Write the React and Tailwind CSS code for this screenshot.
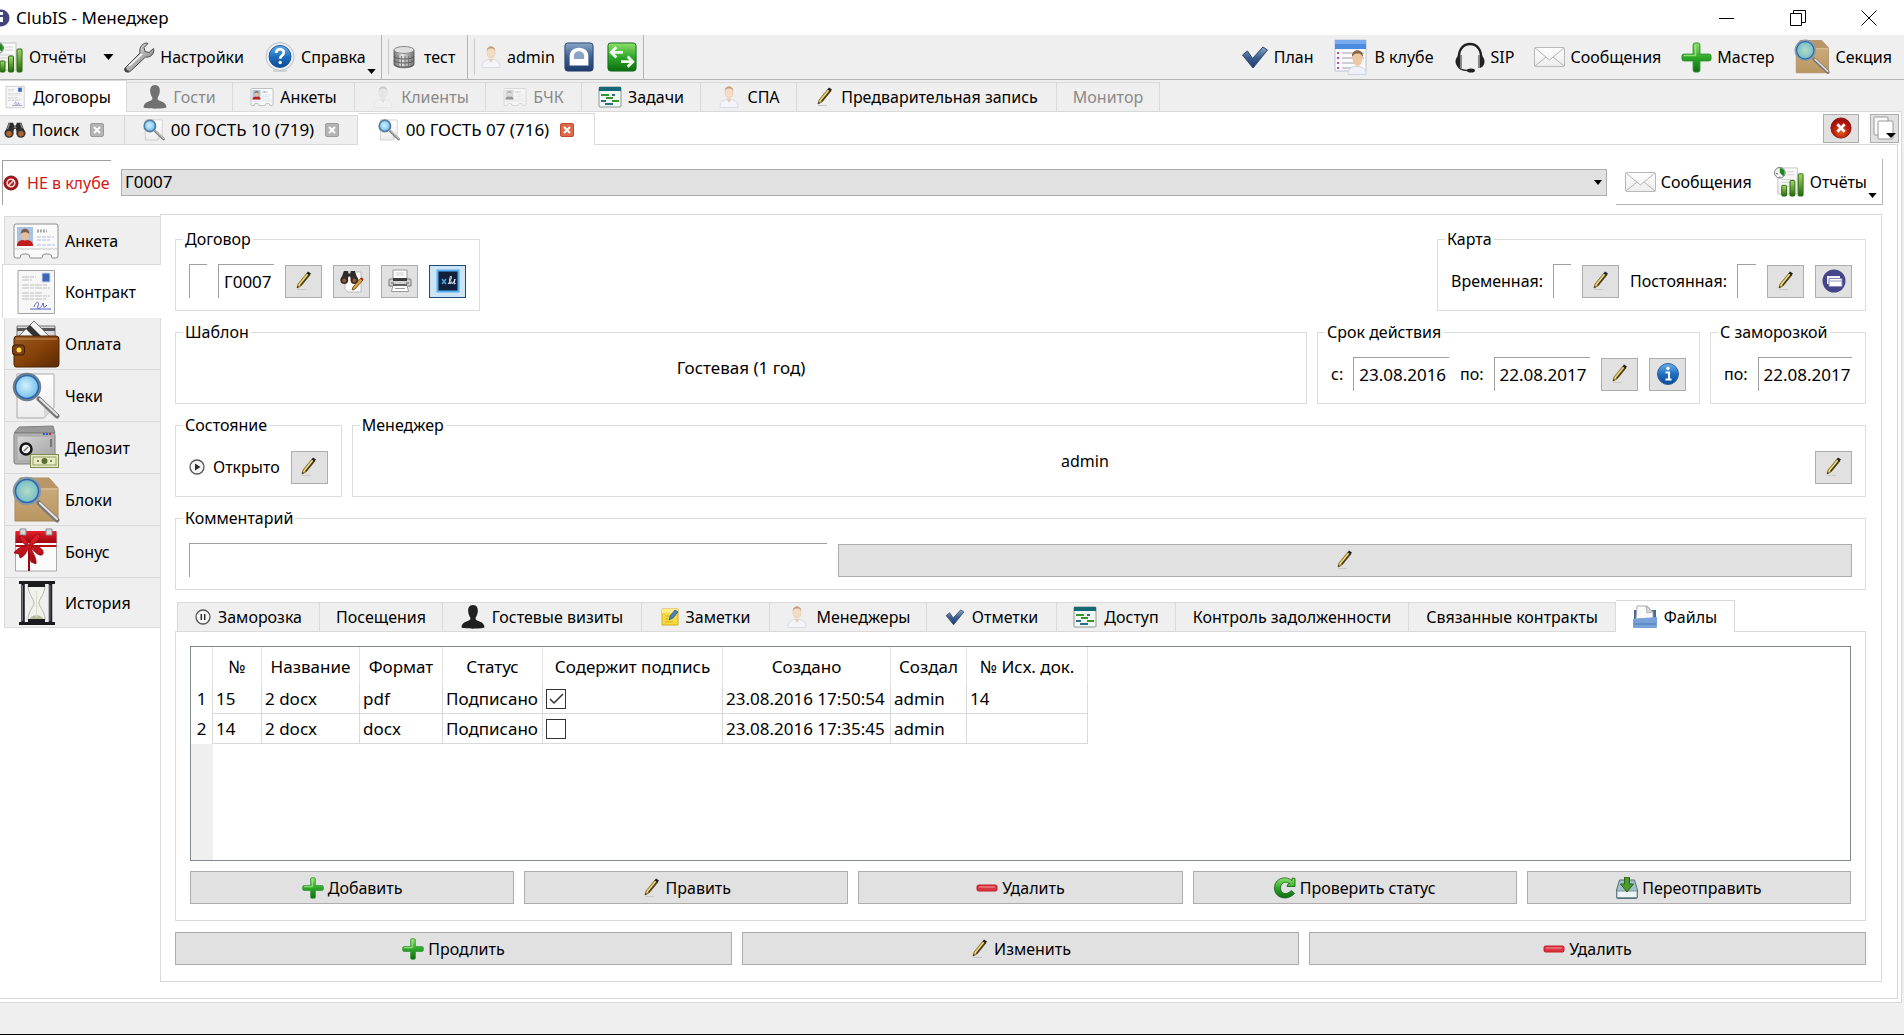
import clsx from "clsx";

/* ---------- shared gradients for all icons ---------- */

function IconDefs() {
  return (
    <svg className="absolute h-0 w-0" aria-hidden="true">
      <defs>
        <linearGradient id="green" x1="0" y1="0" x2="0" y2="1">
          <stop offset="0" stopColor="#8fe06a" />
          <stop offset="0.5" stopColor="#2fa82a" />
          <stop offset="1" stopColor="#0c6e12" />
        </linearGradient>
        <linearGradient id="bar" x1="0" y1="0" x2="0" y2="1">
          <stop offset="0" stopColor="#a6d96a" />
          <stop offset="1" stopColor="#1f6a06" />
        </linearGradient>
        <linearGradient id="blue" x1="0" y1="0" x2="0" y2="1">
          <stop offset="0" stopColor="#6db0ea" />
          <stop offset="0.5" stopColor="#1f6fc0" />
          <stop offset="1" stopColor="#0a4a94" />
        </linearGradient>
        <linearGradient id="navy" x1="0" y1="0" x2="0" y2="1">
          <stop offset="0" stopColor="#8aa6c8" />
          <stop offset="0.5" stopColor="#3d5f90" />
          <stop offset="1" stopColor="#1d3c70" />
        </linearGradient>
        <linearGradient id="steel" x1="0" y1="0" x2="1" y2="1">
          <stop offset="0" stopColor="#f4f4f4" />
          <stop offset="0.5" stopColor="#b4b4b4" />
          <stop offset="1" stopColor="#6a6a6a" />
        </linearGradient>
        <linearGradient id="door" x1="0" y1="0" x2="1" y2="1">
          <stop offset="0" stopColor="#d6d6d6" />
          <stop offset="1" stopColor="#a2a2a2" />
        </linearGradient>
        <linearGradient id="paper" x1="0" y1="0" x2="0" y2="1">
          <stop offset="0" stopColor="#ffffff" />
          <stop offset="1" stopColor="#ececec" />
        </linearGradient>
        <linearGradient id="leather" x1="0" y1="0" x2="1" y2="1">
          <stop offset="0" stopColor="#9a5c28" />
          <stop offset="0.5" stopColor="#864208" />
          <stop offset="1" stopColor="#5a2a04" />
        </linearGradient>
        <linearGradient id="box" x1="0" y1="0" x2="0" y2="1">
          <stop offset="0" stopColor="#cfb185" />
          <stop offset="1" stopColor="#b9965f" />
        </linearGradient>
        <linearGradient id="red" x1="0" y1="0" x2="0" y2="1">
          <stop offset="0" stopColor="#e8202a" />
          <stop offset="1" stopColor="#9c0710" />
        </linearGradient>
        <linearGradient id="cylinder" x1="0" y1="0" x2="1" y2="0">
          <stop offset="0" stopColor="#6e6e6e" />
          <stop offset="0.4" stopColor="#e6e6e6" />
          <stop offset="1" stopColor="#707070" />
        </linearGradient>
        <radialGradient id="lens" cx="0.45" cy="0.45" r="0.6">
          <stop offset="0" stopColor="#d2f1fc" />
          <stop offset="0.7" stopColor="#84c8ef" />
          <stop offset="1" stopColor="#3f88c8" />
        </radialGradient>
        <radialGradient id="lensGreen" cx="0.5" cy="0.5" r="0.6">
          <stop offset="0" stopColor="#b4dccb" />
          <stop offset="0.7" stopColor="#79bfc4" />
          <stop offset="1" stopColor="#3a7fae" />
        </radialGradient>
        <radialGradient id="danger" cx="0.5" cy="0.7" r="0.7">
          <stop offset="0" stopColor="#e25a1c" />
          <stop offset="0.6" stopColor="#b51a0a" />
          <stop offset="1" stopColor="#8c0a06" />
        </radialGradient>
      </defs>
    </svg>
  );
}

function Svg({ box = 24, className, children }) {
  return (
    <svg viewBox={`0 0 ${box} ${box}`} className={clsx("shrink-0", className)} fill="none" aria-hidden="true">
      {children}
    </svg>
  );
}

/* ---------- icons ---------- */

const ReportIcon = ({ className = "h-8 w-8" }) => (
  <Svg box={32} className={className}>
    <path d="M4 2h20v27H4z" fill="url(#paper)" stroke="#c4c4c4" />
    <path d="M13 6h8M13 9h8M8 14h13M8 17h10M8 21h8M8 25h6" stroke="#cfcfcf" />
    <circle cx="6" cy="7" r="5.500" fill="#f3f3f3" stroke="#777" />
    <path d="M6 7V2a5 5 0 0 1 3.500 8.500z" fill="#1f8a1a" />
    <path d="M2 8h2M6 11v1" stroke="#555" />
    <rect x="8" y="20" width="5" height="11" rx="1" fill="url(#bar)" stroke="#2b6a10" />
    <rect x="16.500" y="15" width="5" height="16" rx="1" fill="url(#bar)" stroke="#2b6a10" />
    <rect x="25" y="8" width="5" height="23" rx="1" fill="url(#bar)" stroke="#2b6a10" />
  </Svg>
);

const WrenchIcon = () => (
  <Svg box={32} className="h-8 w-8">
    <path
      d="M2 27 17 12c-1-4 1-9 6-10l2 .5-4 4 1 4 4 1 4.500-4c1.500 5-3 9.500-8 8.500L7 30.500c-3 2-7-1-5-3.500z"
      fill="url(#steel)"
      stroke="#4c4c4c"
    />
    <path d="m6 25 13-12" stroke="#fff" strokeWidth="1.500" />
    <path d="M3.500 27.500a1.500 1.500 0 1 0 2 2" stroke="#333" strokeWidth="1.500" />
  </Svg>
);

const HelpIcon = () => (
  <Svg box={32} className="h-8 w-8">
    <circle cx="16" cy="15.500" r="14" fill="#eef1f4" stroke="#b9bfc6" />
    <circle cx="16" cy="15.500" r="11" fill="url(#blue)" stroke="#1a5ca4" />
    <path d="M12.200 12c0-5 7.600-5 7.600-.4 0 3-3.600 3-3.600 6.200" stroke="#fff" strokeWidth="2.600" />
    <circle cx="16.200" cy="21.500" r="1.700" fill="#fff" />
    <path d="M9 30h14" stroke="#bbb" />
  </Svg>
);

const DatabaseIcon = () => (
  <Svg box={24} className="h-6 w-6">
    <path d="M2 5v14c0 5 20 5 20 0V5z" fill="url(#cylinder)" stroke="#6a6a6a" />
    <ellipse cx="12" cy="5" rx="10" ry="3.500" fill="#dedede" stroke="#888" />
    <path d="M2 11c0 4 20 4 20 0M2 15c0 4 20 4 20 0M2 19c0 4 20 4 20 0" stroke="#555" />
    <path d="M6 10v11.500M9.500 11v11.500M13 11v11.500M16.500 11v11.500" stroke="#777" />
  </Svg>
);

const UserIcon = ({ faded }) => (
  <Svg box={24} className={clsx("h-6 w-6", faded && "opacity-50 grayscale")}>
    <path d="M3 22.500c0-6 3-7 6.500-8h5c3.500 1 6.500 2 6.500 8z" fill="#f3f5fa" stroke="#d8dce6" />
    <path d="m9.500 14 2.500 4 2.500-4z" fill="#e8cdb2" />
    <ellipse cx="12" cy="7.500" rx="4" ry="5.800" fill="#f3dcc4" stroke="#e0c0a0" strokeWidth=".5" />
    <path d="M7.800 6C7.500 0 16.500 0 16.200 6c-1-2-2-2.500-4.200-2.500S8.800 4 7.800 6z" fill="#c49a74" />
  </Svg>
);

const SilhouetteIcon = ({ faded }) => (
  <Svg box={24} className={clsx("h-6 w-6", faded && "opacity-60")}>
    <path
      d="M12 0C8 0 7 3 7.200 6.500c.2 3 1.400 5 2.300 6.500 0 2-1.500 2.500-4 3.500C2 18 1 19 .5 22.500c3 1.500 20 1.500 23 0C23 19 22 18 18.500 16.500c-2.500-1-4-1.500-4-3.500.9-1.500 2.100-3.500 2.300-6.500C17 3 16 0 12 0z"
      fill="#1f1f1f"
    />
  </Svg>
);

const LockIcon = () => (
  <Svg box={32} className="h-[30px] w-[30px]">
    <rect x="1" y="1" width="30" height="30" rx="3" fill="url(#navy)" stroke="#24406c" />
    <path d="M6 25V15C6 3 26 3 26 15v10z" fill="#fff" />
    <path d="M10.500 18v-3c0-7 11-7 11 0v3z" fill="#8aa4c6" />
  </Svg>
);

const SwapIcon = () => (
  <Svg box={32} className="h-[30px] w-[30px]">
    <rect x="1" y="1" width="30" height="30" rx="3" fill="url(#green)" stroke="#12661a" />
    <path d="M17 11H5m5-5.500L4.500 11l5.500 5.500M15 21h12m-5-5.500 5.500 5.500-5.500 5.500" stroke="#eefbee" strokeWidth="3" />
  </Svg>
);

const CheckIcon = ({ className = "h-7 w-7" }) => (
  <Svg box={28} className={className}>
    <path d="m1.500 12 5-4 5 7.500L22 4l4.500 3L12 25z" fill="url(#navy)" stroke="#2c4664" strokeLinejoin="round" />
  </Svg>
);

const ClubIcon = () => (
  <Svg box={36} className="h-9 w-9">
    <path d="M1 1h31v31H1z" fill="#fbfbfd" stroke="#b8c2d4" />
    <path d="M1 1h31v9H1z" fill="#4c8be0" />
    <path d="M1 1h31v4H1z" fill="#78aaee" />
    <path d="M8 14h22M8 19h22M8 24h14M8 29h10" stroke="#cdcdd2" strokeWidth="2" />
    <path d="M3 14h2M3 19h2M3 24h2M3 29h2" stroke="#c840b8" strokeWidth="2" />
    <path d="M14 35.500c0-6 3-7 7-8h4c4 1 7 2 7 8z" fill="#eef1f8" stroke="#cdd4e0" />
    <ellipse cx="23.500" cy="19.500" rx="5" ry="7.500" fill="#ecc9a4" />
    <path d="M18 18c-1-9 12-9 11 0-2-3-3-3.500-5.500-3.500S20 15 18 18z" fill="#8a6444" />
  </Svg>
);

const HeadsetIcon = () => (
  <Svg box={32} className="h-8 w-8">
    <path d="M5 18C3 -2 29 -2 27 18" stroke="#222" strokeWidth="2.500" />
    <path d="M6 14c-6 2-6 11 0 13z" fill="#222" />
    <path d="M26 14c6 2 6 11 0 13z" fill="#222" />
    <path d="M7 14v13M25 14v13" stroke="#888" strokeWidth="2" />
    <path d="M4 25c1 4 6 4.500 11 4.500" stroke="#333" strokeWidth="1.500" />
    <ellipse cx="17" cy="29.500" rx="4" ry="2" fill="#222" />
  </Svg>
);

const MailIcon = () => (
  <svg viewBox="0 0 31 20" className="h-5 w-[31px] shrink-0" fill="none" aria-hidden="true">
    <rect x=".5" y=".5" width="30" height="19" rx="1" fill="url(#paper)" stroke="#b8b8b8" />
    <path d="m1 1 14.500 12L30 1M1 19l11-9M30 19l-11-9" stroke="#b4b4b4" />
  </svg>
);

const PlusIcon = ({ className = "h-[22px] w-[22px]" }) => (
  <Svg box={32} className={className}>
    <path
      d="M12.500 3q0-2 2-2h3q2 0 2 2v9.500H29q2 0 2 2v3q0 2-2 2h-9.500V29q0 2-2 2h-3q-2 0-2-2v-9.500H3q-2 0-2-2v-3q0-2 2-2h9.500z"
      fill="url(#green)"
      stroke="#2a8f2a"
    />
    <path d="M15 3v11H3" stroke="#b4f09a" strokeWidth="1.500" opacity=".7" />
  </Svg>
);

const MinusIcon = () => (
  <Svg box={22} className="h-[22px] w-[22px]">
    <rect x="1" y="8" width="20" height="6" rx="1.500" fill="#dc3540" stroke="#c41c26" />
    <path d="M3 10h16" stroke="#f29aa0" />
  </Svg>
);

const PencilIcon = ({ className = "h-5 w-5" }) => (
  <Svg box={20} className={className}>
    <path d="M3 18.500h9" stroke="#c9c9c9" />
    <path d="m3 17 1-4 9-11 3 2-9 11z" fill="#d9b64e" stroke="#7a6428" strokeWidth=".8" />
    <path d="m5 14 9-11" stroke="#f6e6a0" />
    <path d="m6.500 14.500 9-11" stroke="#3a3420" strokeWidth="1.200" />
    <path d="m12.500 2.500 1.500-2 3 2-1.500 2z" fill="#222" />
    <path d="m3 17 .6-2 1.400 1z" fill="#222" />
  </Svg>
);

const BinocularsIcon = () => (
  <Svg box={24} className="h-[22px] w-[22px]">
    <path d="M5 4h5l1 3h2l1-3h5l4 11h-9l-1-4h-2l-1 4H1z" fill="#2c2c2c" />
    <path d="M6 5 3 13M18 5l2 5" stroke="#8b8b8b" strokeWidth="1.500" />
    <circle cx="5.500" cy="15.500" r="5" fill="#333" />
    <circle cx="18.500" cy="15.500" r="5" fill="#333" />
    <circle cx="5.500" cy="16" r="3" fill="#b0662c" />
    <circle cx="18.500" cy="16" r="3" fill="#b0662c" />
    <circle cx="12" cy="9" r="1.500" fill="#777" />
  </Svg>
);

const EditSearchIcon = () => (
  <Svg box={24} className="h-6 w-6">
    <path d="M5 3h16v20H8l-3-3z" fill="#fff" stroke="#bbb" />
    <g transform="translate(0 -1) scale(.78)">
      <path d="M5 4h5l1 3h2l1-3h5l4 11h-9l-1-4h-2l-1 4H1z" fill="#2c2c2c" />
      <circle cx="5.500" cy="15.500" r="5" fill="#3a2c24" />
      <circle cx="18.500" cy="15.500" r="5" fill="#3a2c24" />
      <circle cx="5.500" cy="16" r="2.500" fill="#8d5a3a" />
      <circle cx="18.500" cy="16" r="2.500" fill="#8d5a3a" />
    </g>
    <path d="m12 21 1-3 8-9 2 2-8 9z" fill="#e0a832" stroke="#5a3a14" strokeWidth=".8" />
    <path d="m21 9 2 2" stroke="#b02a1a" strokeWidth="2" />
  </Svg>
);

const PrinterIcon = () => (
  <Svg box={24} className="h-6 w-6">
    <path d="M5 1h14v9H5z" fill="#fcfcfc" stroke="#999" />
    <path d="M8 4h8M8 6h8" stroke="#d0d0d0" />
    <path d="M1 11q0-1 1-1h20q1 0 1 1v6H1z" fill="#d2d2d2" stroke="#777" />
    <path d="M5 9h14v3H5z" fill="#3a3a3a" />
    <path d="M3 14h3M18 14h3" stroke="#555" />
    <path d="M5 16h14l1.500 6.500h-17z" fill="#fff" stroke="#999" />
    <path d="M5 16h14" stroke="#444" strokeWidth="1.500" />
    <path d="M7 19.500h10" stroke="#999" />
  </Svg>
);

const SignatureIcon = () => (
  <Svg box={24} className="h-6 w-6">
    <rect x="1.500" y="1.500" width="21" height="21" fill="#10203a" stroke="#57aef2" strokeWidth="2" />
    <path d="m6 10 4 5m0-5-4 5" stroke="#4aa3e8" strokeWidth="1.500" />
    <path d="M12 15c3-3 4-8 3-8s-2 5-1 8c1-3 2-3 2 0 1-1 2-2 3-5l-1 5 1.500-.5" stroke="#e8eef6" />
  </Svg>
);

const GanttIcon = () => (
  <Svg box={24} className="h-6 w-6">
    <rect x="1" y="2" width="22" height="20" rx="1" fill="#f4f8f4" stroke="#8a9a94" />
    <path d="M1 2h22v4H1z" fill="#146878" />
    <path d="M3 10h8M8 13h7M14 16h7" stroke="#36962e" strokeWidth="2" />
    <path d="M14 10h3M3 16h5M7 19h8" stroke="#2b6f86" strokeWidth="2" />
  </Svg>
);

const IdCardIcon = ({ className = "h-6 w-6", faded }) => (
  <Svg box={48} className={clsx(className, faded && "opacity-50 grayscale")}>
    <path
      d="M2 9q0-2 2-2h40q2 0 2 2v30q0 2-2 2h-4q0-4-3-4h-4q-3 0-3 4H18q0-4-3-4h-4q-3 0-3 4H4q-2 0-2-2z"
      fill="#fafafa"
      stroke="#8f8f8f"
    />
    <path d="M3 32h42" stroke="#c6c6c6" />
    <path d="M5 10h16v19H5z" fill="#a9c2e2" />
    <path d="M5 29c0-5 3-6 8-6s8 1 8 6z" fill="#c01c1c" />
    <ellipse cx="13" cy="18" rx="4" ry="5.500" fill="#e4bf9b" />
    <path d="M8.800 17c-.5-7 9-7 8.400 0-2-2.500-6.400-2.500-8.400 0z" fill="#77604a" />
    <path d="M25 14h10" stroke="#a8a8a8" strokeWidth="3" strokeDasharray="2 1" />
    <path d="M25 20h17M25 23h13M25 28h18" stroke="#a9c0e0" strokeDasharray="4 1" />
  </Svg>
);

const ContractIcon = ({ className = "h-6 w-6" }) => (
  <Svg box={48} className={className}>
    <path d="M6 2.500h36.500v43H6z" fill="#f7f7f7" stroke="#a2a2a2" />
    <path d="M30 5h8v9h-8z" fill="#3a66bc" stroke="#cfd8ea" />
    <path d="M10 9h14M10 12h10M10 17h26M10 20h28M10 25h20M10 28h28M10 31h24" stroke="#bdbdbd" strokeDasharray="7 1 4 1" />
    <path d="M18 41h21M22 39c2-6 6-6 4-1s4 2 5-3c1 3 0 5 2 4l2-2" stroke="#5a62c0" />
  </Svg>
);

const WalletIcon = () => (
  <Svg box={48} className="h-12 w-12">
    <path d="M5 6h38v12H5z" fill="#d8d8d8" stroke="#777" />
    <path d="M5 8h38v3H5z" fill="#555" />
    <path d="m6 17 16-16 16 16z" fill="#f4f4f4" stroke="#777" />
    <path d="m14 9 4-4 13 13h-8z" fill="#333" />
    <path d="M2 19q0-3 3-3h39q3 0 3 3v25q0 3-3 3H4q-2 0-2-3z" fill="url(#leather)" stroke="#4e2405" />
    <path d="M4 19h41" stroke="#c8925e" />
    <rect x=".5" y="25" width="12" height="10" rx="2.500" fill="#7a4010" stroke="#3e1c04" />
    <circle cx="7" cy="30" r="2.500" fill="#ffd84a" />
  </Svg>
);

const DocSearchIcon = ({ className = "h-[22px] w-[22px]" }) => (
  <Svg box={48} className={className}>
    <path d="M5 2h37v34L32 46H5z" fill="url(#paper)" stroke="#aaa" />
    <path d="M42 36H32v10z" fill="#d8d8d8" />
    <path d="m27 27 18 17" stroke="#777" strokeWidth="5" strokeLinecap="round" />
    <path d="m28 27 17 16" stroke="#e4e4e4" strokeWidth="2" strokeLinecap="round" />
    <circle cx="15" cy="15" r="13" fill="url(#lens)" stroke="#6f7f8e" strokeWidth="2.500" />
    <circle cx="15" cy="15" r="11.500" stroke="#2c66ac" strokeWidth="1.500" />
  </Svg>
);

const SafeIcon = () => (
  <Svg box={48} className="h-12 w-12">
    <path d="m7 3 34-1 2 7H2z" fill="#9a9a9a" stroke="#808080" />
    <rect x="2" y="9" width="41" height="31" rx="2" fill="#b2b2b2" stroke="#7d7d7d" />
    <rect x="5" y="12" width="35" height="25" fill="url(#door)" stroke="#a4a4a4" />
    <path d="M31 10h5" stroke="#3454c8" strokeWidth="2" strokeDasharray="2 1" />
    <path d="M37 10h2" stroke="#c82828" strokeWidth="2" />
    <circle cx="14" cy="25" r="5.500" fill="#f4f4f4" stroke="#161616" strokeWidth="2.500" />
    <path d="m12 27 4-4" stroke="#777" strokeWidth="1.500" />
    <path d="M39 15v8" stroke="#777" strokeWidth="2" />
    <rect x="18.500" y="30.500" width="28" height="13" fill="#e6ebc4" stroke="#7d8a50" />
    <rect x="21" y="33" width="23" height="8" stroke="#94a068" />
    <circle cx="32.500" cy="37" r="3" fill="#5a6c34" />
    <path d="M25 37h2M38 37h2" stroke="#7d8a50" strokeWidth="2" />
  </Svg>
);

const BoxSearchIcon = ({ className = "h-12 w-12" }) => (
  <Svg box={48} className={className}>
    <path d="M3 13 8 2h29l9 10v33H3z" fill="url(#box)" stroke="#a88a5c" />
    <path d="M24 2h13l9 10H27z" fill="#b99668" />
    <path d="M26 13h20" stroke="#e0c69c" />
    <path d="m27 27 18 17" stroke="#777" strokeWidth="5" strokeLinecap="round" />
    <path d="m28 27 17 16" stroke="#e4e4e4" strokeWidth="2" strokeLinecap="round" />
    <circle cx="15" cy="15" r="13" fill="url(#lensGreen)" stroke="#8a98a4" strokeWidth="2.500" />
    <circle cx="15" cy="15" r="11.500" stroke="#2c66ac" strokeWidth="1.500" />
  </Svg>
);

const GiftIcon = () => (
  <Svg box={48} className="h-12 w-12">
    <path d="M3.500 5h41v38h-41z" fill="#fafafa" stroke="#aaa" />
    <path d="M3.500 3h41v12h-41z" fill="url(#red)" />
    <path d="M8 1h6v6H8zM34 1h6v6h-6z" fill="#d8d8d8" stroke="#888" />
    <path d="M3.500 18h41" stroke="#b30d16" strokeWidth="2" />
    <path d="M17 18v25" stroke="#9c0710" strokeWidth="2" />
    <path
      d="M17 18C19 8 28 3 28 8c0 4-6 8-9 10 6-1 14 3 12 8-3 4-9-3-12-6 2 5 6 11 5 16l-5-2-3-13c-2 4-4 8-8 9l-1-4-5-1c2-4 8-7 13-7C12 16 7 12 8 8c3-2 7 4 9 10z"
      fill="url(#red)"
      stroke="#8c0a12"
      strokeWidth=".7"
    />
  </Svg>
);

const HourglassIcon = () => (
  <Svg box={48} className="h-12 w-12">
    <path d="M16 6h17c0 9-6 14-6 18s6 8 6 17H16c0-9 6-13 6-17s-6-9-6-18z" fill="#f0f2ee" stroke="#b4b8b0" />
    <path d="M18 40c1-5 12-5 13 0z" fill="#b8bd9c" />
    <path d="M24.500 12v26" stroke="#dcdcc4" />
    <path d="M7 2h36v3H33v3H16V5H7z" fill="#1b1b1f" />
    <path d="M7 46h36v-3H33v-3H16v3H7z" fill="#1b1b1f" />
    <path d="M11 5v38M38.500 5v38" stroke="#1d1d22" strokeWidth="3.500" />
    <path d="M10.500 6v36M38 6v36" stroke="#77777c" />
  </Svg>
);

const BannedIcon = () => (
  <Svg box={16} className="h-4 w-4">
    <circle cx="8" cy="8" r="7" fill="#a81818" stroke="#7c0e0e" />
    <circle cx="8" cy="8" r="3.800" stroke="#f4dcdc" strokeWidth="1.600" />
    <path d="m5 11 6-6" stroke="#f4dcdc" strokeWidth="1.600" />
  </Svg>
);

const CardsIcon = () => (
  <Svg box={24} className="h-6 w-6">
    <circle cx="12" cy="12" r="11.500" fill="#45458a" />
    <path d="M5 7h13v8H5z" fill="#f2f2f8" />
    <path d="M7 9.500h13v8H7z" fill="#fff" stroke="#8a8abc" />
    <path d="M7 12h13" stroke="#9a9ac4" />
  </Svg>
);

const InfoIcon = () => (
  <Svg box={24} className="h-6 w-6">
    <circle cx="12" cy="12" r="10.500" fill="url(#blue)" stroke="#2b62a0" />
    <circle cx="12" cy="6.500" r="1.700" fill="#fff" />
    <path d="M9.500 10.500H13V17m-3.500.5h6" stroke="#fff" strokeWidth="2" />
  </Svg>
);

const PlayIcon = () => (
  <Svg box={16} className="h-4 w-4">
    <circle cx="8" cy="8" r="7" fill="#f6f6f6" stroke="#555" strokeWidth="1.300" />
    <path d="m6 4.500 5.500 3.500L6 11.500z" fill="#2c2c2c" />
  </Svg>
);

const PauseIcon = () => (
  <Svg box={16} className="h-4 w-4">
    <circle cx="8" cy="8" r="7" fill="#f6f6f6" stroke="#555" strokeWidth="1.300" />
    <path d="M6.300 5v6M9.700 5v6" stroke="#2c2c2c" strokeWidth="1.500" />
  </Svg>
);

const NoteIcon = () => (
  <Svg box={18} className="h-[18px] w-[18px]">
    <path d="M1 1h16v16H1z" fill="#f6da3e" stroke="#d3b01e" />
    <path d="M1 1h16v4H1z" fill="#fbec8e" />
    <path d="M4 8h4M4 11h3M4 14h8" stroke="#d6b628" />
    <path d="m8 12 1-4 5-6 3 2-5 6z" fill="#4a80bc" stroke="#1f4d84" strokeWidth=".7" />
  </Svg>
);

const FolderIcon = () => (
  <Svg box={24} className="h-6 w-6">
    <path d="M1 5h22v12H1z" fill="#45699e" />
    <path d="M4 1h10l6 6v8H3z" fill="#fafafa" stroke="#aaa" />
    <path d="m13 1 1 7 6-1z" fill="#d6d6d6" stroke="#999" strokeWidth=".6" />
    <path d="M0 14q6-1 9-1t15-1v10q0 1-1 1H1q-1 0-1-1z" fill="#78a2d8" />
    <path d="M1 19h22" stroke="#4a79b8" />
  </Svg>
);

const RefreshIcon = () => (
  <Svg box={22} className="h-[22px] w-[22px]">
    <path
      d="M18 3.500V1l3 .5v8h-8l1-2.500 1.500-.5C11 3.500 6.500 6 6.500 11s5 7.500 9 4l2-1.500 3 3C13 24.500.5 21 .5 11 .5 1.500 11-2 18 3.500z"
      fill="url(#green)"
      stroke="#0f5c14"
      strokeWidth=".8"
    />
  </Svg>
);

const InboxIcon = () => (
  <Svg box={22} className="h-[22px] w-[22px]">
    <path d="M3.500 3h15l3 10v7q0 1.500-1.500 1.500H2Q.5 21.500.5 20v-7z" fill="#9fc0ca" stroke="#54717c" />
    <path d="M1 14h20v6.500H1z" fill="#eef3f5" stroke="#7c929a" />
    <path d="M8.500 0h5v7h4L11 15 4.500 7h4z" fill="#4f9a30" stroke="#2c6614" />
  </Svg>
);

const CloseRedIcon = () => (
  <Svg box={24} className="h-[22px] w-[22px]">
    <circle cx="12" cy="12" r="11" fill="url(#danger)" stroke="#8a1410" />
    <path d="m8 8 8 8m0-8-8 8" stroke="#fff" strokeWidth="3" />
  </Svg>
);

const CopiesIcon = () => (
  <Svg box={24} className="h-6 w-6">
    <rect x="1" y="1" width="14" height="18" rx="1" fill="#fafafa" stroke="#999" />
    <rect x="5" y="5" width="15" height="18" rx="1" fill="#fff" stroke="#999" />
    <path d="M13 17h10l-5 5z" fill="#000" />
  </Svg>
);

const AppIcon = () => (
  <svg viewBox="6 0 10 18" className="h-[18px] w-[10px] shrink-0" aria-hidden="true">
    <circle cx="7" cy="9" r="8.500" fill="#43437f" />
    <path d="M6 3h3v3H6zM6 8h3v5H6z" fill="#fff" />
  </svg>
);

const Caret = ({ className = "h-[6px] w-[10px]" }) => (
  <svg viewBox="0 0 10 6" className={clsx("shrink-0", className)} aria-hidden="true">
    <path d="M0 0h10L5 6z" fill="#000" />
  </svg>
);

/* ---------- building blocks ---------- */

function ToolButton({ icon, label, menu, className }) {
  return (
    <button type="button" className={clsx("relative flex items-center gap-[5px] whitespace-nowrap", className)}>
      {icon}
      {label}
      {menu && <Caret className="absolute -right-[10px] -bottom-[1px] h-[5px] w-[9px]" />}
    </button>
  );
}

function PushButton({ icon, label, title, className }) {
  return (
    <button
      type="button"
      title={title}
      className={clsx(
        "flex h-[33px] items-center justify-center gap-1 border whitespace-nowrap",
        className ?? "w-[37px] shrink-0 border-[#adadad] bg-[#e1e1e1]"
      )}
    >
      {icon}
      {label}
    </button>
  );
}

function Field({ label, value, className, hideLabel }) {
  return (
    <label className={clsx("flex items-center gap-[10px]", className)}>
      {!hideLabel && <span className="whitespace-nowrap">{label}</span>}
      <input
        type="text"
        readOnly
        aria-label={label}
        defaultValue={value}
        className="h-[34px] w-full min-w-0 border-t border-l border-[#a0a0a0] bg-white pl-[5px] text-[17px] outline-none"
      />
    </label>
  );
}

function Group({ title, className, children }) {
  return (
    <fieldset className={clsx("min-w-0 border border-[#dcdcdc] px-[13px]", className)}>
      <legend className="-ml-[6px] px-[2px] leading-5">{title}</legend>
      <div className="flex h-[61px] items-center gap-[11px] pt-[3px]">{children}</div>
    </fieldset>
  );
}

function CloseMark({ active }) {
  return (
    <span
      className={clsx(
        "ml-[5px] flex h-[14px] w-[14px] items-center justify-center rounded-[2px] border",
        active ? "border-[#c2492c] bg-[#e0694a]" : "border-[#9c9c9c] bg-[#b4b4b4]"
      )}
    >
      <svg viewBox="0 0 8 8" className="h-2 w-2" aria-hidden="true">
        <path d="m1 1 6 6m0-6-6 6" stroke="#fff" strokeWidth="2" />
      </svg>
    </span>
  );
}

/* ---------- data ---------- */

const mainTabs = [
  { label: "Договоры", icon: <ContractIcon />, width: "w-[127px] pr-3", active: true },
  { label: "Гости", icon: <SilhouetteIcon faded />, width: "w-[106px]", disabled: true },
  { label: "Анкеты", icon: <IdCardIcon />, width: "w-[122px]" },
  { label: "Клиенты", icon: <UserIcon faded />, width: "w-[131px]", disabled: true },
  { label: "БЧК", icon: <IdCardIcon faded />, width: "w-[96px]", disabled: true },
  { label: "Задачи", icon: <GanttIcon />, width: "w-[119px]" },
  { label: "СПА", icon: <UserIcon />, width: "w-[96px]" },
  { label: "Предварительная запись", icon: <PencilIcon />, width: "w-[260px]" },
  { label: "Монитор", width: "w-[103px]", disabled: true },
];

const docTabs = [
  { label: "Поиск", icon: <BinocularsIcon />, width: "w-[125px] pr-4 text-base" },
  { label: "00 ГОСТЬ 10 (719)", icon: <DocSearchIcon />, width: "w-[233px]" },
  { label: "00 ГОСТЬ 07 (716)", icon: <DocSearchIcon />, width: "w-[237px]", active: true },
];

const sideTabs = [
  { label: "Анкета", icon: <IdCardIcon className="h-12 w-12" /> },
  { label: "Контракт", icon: <ContractIcon className="h-12 w-12" />, active: true },
  { label: "Оплата", icon: <WalletIcon /> },
  { label: "Чеки", icon: <DocSearchIcon className="h-12 w-12" /> },
  { label: "Депозит", icon: <SafeIcon /> },
  { label: "Блоки", icon: <BoxSearchIcon /> },
  { label: "Бонус", icon: <GiftIcon /> },
  { label: "История", icon: <HourglassIcon /> },
];

const detailTabs = [
  { label: "Заморозка", icon: <PauseIcon />, width: "w-[143px]" },
  { label: "Посещения", width: "w-[123px]" },
  { label: "Гостевые визиты", icon: <SilhouetteIcon />, width: "w-[199px]" },
  { label: "Заметки", icon: <NoteIcon />, width: "w-[128px]" },
  { label: "Менеджеры", icon: <UserIcon />, width: "w-[157px]" },
  { label: "Отметки", icon: <CheckIcon className="h-5 w-5" />, width: "w-[130px]" },
  { label: "Доступ", icon: <GanttIcon />, width: "w-[119px]" },
  { label: "Контроль задолженности", width: "w-[233px]" },
  { label: "Связанные контракты", width: "w-[207px]" },
  { label: "Файлы", icon: <FolderIcon />, width: "w-[119px]", active: true },
];

const columns = [
  { title: "", width: "w-[22px]" },
  { title: "№", width: "w-[49px]" },
  { title: "Название", width: "w-[98px]" },
  { title: "Формат", width: "w-[83px]" },
  { title: "Статус", width: "w-[100px]" },
  { title: "Содержит подпись", width: "w-[180px]" },
  { title: "Создано", width: "w-[168px]" },
  { title: "Создал", width: "w-[76px]" },
  { title: "№ Исх. док.", width: "w-[121px]" },
];

const files = [
  { id: 15, name: "2 docx", format: "pdf", status: "Подписано", signed: true, created: "23.08.2016 17:50:54", author: "admin", ref: "14" },
  { id: 14, name: "2 docx", format: "docx", status: "Подписано", signed: false, created: "23.08.2016 17:35:45", author: "admin", ref: "" },
];

const fileActions = [
  { label: "Добавить", icon: <PlusIcon /> },
  { label: "Править", icon: <PencilIcon /> },
  { label: "Удалить", icon: <MinusIcon /> },
  { label: "Проверить статус", icon: <RefreshIcon /> },
  { label: "Переотправить", icon: <InboxIcon /> },
];

const contractActions = [
  { label: "Продлить", icon: <PlusIcon /> },
  { label: "Изменить", icon: <PencilIcon /> },
  { label: "Удалить", icon: <MinusIcon /> },
];

const wideButton = "flex-1 border-[#adadad] bg-[#e1e1e1]";

/* ---------- sections ---------- */

function TitleBar() {
  return (
    <header className="flex h-[35px] items-center bg-white">
      <AppIcon />
      <h1 className="ml-[6px] flex-1 text-[17px]">ClubIS - Менеджер</h1>
      <div className="flex items-center gap-[55px] pr-[27px]">
        <button type="button" aria-label="Свернуть">
          <svg viewBox="0 0 16 16" className="h-4 w-4" fill="none" stroke="#000">
            <path d="M0 8.500h15" />
          </svg>
        </button>
        <button type="button" aria-label="Развернуть">
          <svg viewBox="0 0 16 16" className="h-4 w-4" fill="none" stroke="#000">
            <path d="M.5 3.500h11v12H.5zM3.500 3.500v-3h12v12h-4" />
          </svg>
        </button>
        <button type="button" aria-label="Закрыть">
          <svg viewBox="0 0 16 16" className="h-4 w-4" fill="none" stroke="#000">
            <path d="m.5.5 15 15m0-15-15 15" />
          </svg>
        </button>
      </div>
    </header>
  );
}

function Toolbar() {
  return (
    <div className="flex h-[45px] items-center justify-between overflow-hidden border-b border-[#b4b4b4]">
      <div className="flex h-full items-center">
        <div className="flex h-full w-[382px] items-center border-r border-[#b4b4b4]">
          <ToolButton icon={<ReportIcon />} label="Отчёты" className="-ml-[8px]" />
          <button type="button" aria-label="Список отчётов" className="px-[17px]">
            <Caret className="h-[6px] w-[11px]" />
          </button>
          <ToolButton icon={<WrenchIcon />} label="Настройки" className="-ml-[8px]" />
          <ToolButton icon={<HelpIcon />} label="Справка" menu className="ml-[20px]" />
        </div>
        <div className="flex h-full w-[86px] items-center border-r border-[#b4b4b4] pl-[6px]">
          <span className="mr-[3px] h-9 w-px bg-[#c8c8c8]" />
          <DatabaseIcon />
          <span className="ml-2">тест</span>
        </div>
        <div className="flex h-full w-[176px] items-center border-r border-[#b4b4b4] pl-[6px]">
          <span className="mr-1 h-9 w-px bg-[#c8c8c8]" />
          <UserIcon />
          <span className="ml-1">admin</span>
          <button type="button" aria-label="Заблокировать" className="ml-[9px]">
            <LockIcon />
          </button>
          <button type="button" aria-label="Сменить пользователя" className="ml-[13px]">
            <SwapIcon />
          </button>
        </div>
      </div>
      <div className="flex items-center gap-5 pr-3">
        <ToolButton icon={<CheckIcon />} label="План" />
        <ToolButton icon={<ClubIcon />} label="В клубе" />
        <ToolButton icon={<HeadsetIcon />} label="SIP" />
        <ToolButton icon={<MailIcon />} label="Сообщения" />
        <ToolButton icon={<PlusIcon className="h-[31px] w-[31px]" />} label="Мастер" />
        <ToolButton icon={<BoxSearchIcon className="h-9 w-9" />} label="Секция" />
      </div>
    </div>
  );
}

function TabStrip({ tabs, className, itemClass, activeClass, closable, gap = "gap-[6px]" }) {
  return (
    <div role="tablist" className={clsx("relative z-10 -mb-px flex items-end", className)}>
      {tabs.map((tab) => (
        <button
          key={tab.label}
          type="button"
          role="tab"
          aria-selected={Boolean(tab.active)}
          disabled={tab.disabled}
          className={clsx(
            "flex items-center justify-center border-t border-r border-[#d9d9d9] whitespace-nowrap",
            gap,
            tab.width,
            tab.active ? clsx("bg-white", activeClass) : clsx("border-b bg-[#efefef]", itemClass),
            tab.disabled && "text-[#8a8a8a]"
          )}
        >
          {tab.icon}
          {tab.label}
          {closable && <CloseMark active={tab.active} />}
        </button>
      ))}
    </div>
  );
}

function ClientHeader() {
  return (
    <div className="flex items-center pt-[14px] pr-[14px] pl-[2px]">
      <div className="flex h-[45px] w-[109px] items-center gap-2 border-t border-l border-[#a0a0a0] whitespace-nowrap text-[#d01818]">
        <BannedIcon />
        НЕ в клубе
      </div>
      <div className="relative ml-[10px] flex-1">
        <select
          aria-label="Контракт"
          defaultValue="Г0007"
          className="block h-[27px] w-full appearance-none border border-[#adadad] bg-[#e1e1e1] px-[3px] text-[17px] leading-5 outline-none"
        >
          <option>Г0007</option>
        </select>
        <Caret className="pointer-events-none absolute top-[11px] right-[5px] h-[5px] w-[8px]" />
      </div>
      <div className="ml-[9px] flex h-[46px] items-center gap-[22px] border-r border-b border-[#b4b4b4] pr-[15px] pl-[9px]">
        <ToolButton icon={<MailIcon />} label="Сообщения" />
        <ToolButton icon={<ReportIcon className="h-[31px] w-[31px]" />} label="Отчёты" menu />
      </div>
    </div>
  );
}

function SideTabs() {
  return (
    <div role="tablist" aria-orientation="vertical" className="relative z-10 -mr-px flex w-[161px] flex-col pt-[2px]">
      {sideTabs.map((tab, i) => (
        <button
          key={tab.label}
          type="button"
          role="tab"
          aria-selected={Boolean(tab.active)}
          className={clsx(
            "flex items-center gap-[5px] border-[#d9d9d9]",
            tab.active && "ml-[2px] h-[54px] border-t border-l bg-white pl-[9px]",
            !tab.active && "ml-1 border-r border-l bg-[#efefef] pl-[7px]",
            !tab.active && (i === 0 ? "h-12 border-t" : i === sideTabs.length - 1 ? "h-[50px] border-b" : "h-[52px] border-b")
          )}
        >
          {tab.icon}
          {tab.label}
        </button>
      ))}
    </div>
  );
}

function FilesTable() {
  const cell = "border-r border-b border-[#d9d9d9] px-[3px]";
  return (
    <div className="flex flex-1 flex-col border border-[#828790] bg-white">
      <table className="w-[897px] table-fixed border-separate border-spacing-0 text-[17px] whitespace-nowrap">
        <thead>
          <tr className="h-[37px]">
            {columns.map((col) => (
              <th key={col.title} className={clsx("border-r border-[#e5e5e5] pt-[2px] font-normal", col.width)}>
                {col.title}
              </th>
            ))}
          </tr>
        </thead>
        <tbody>
          {files.map((file, i) => (
            <tr key={file.id} className="h-[30px]">
              <th className="border-r border-[#d9d9d9] font-normal">{i + 1}</th>
              <td className={cell}>{file.id}</td>
              <td className={cell}>{file.name}</td>
              <td className={cell}>{file.format}</td>
              <td className={cell}>{file.status}</td>
              <td className={cell}>
                <span className="relative block h-5 w-5">
                  <input
                    type="checkbox"
                    aria-label="Содержит подпись"
                    defaultChecked={file.signed}
                    className="peer block h-5 w-5 appearance-none border border-[#333] bg-white"
                  />
                  <svg viewBox="0 0 20 20" className="pointer-events-none absolute inset-0 hidden h-5 w-5 peer-checked:block" fill="none">
                    <path d="m4 10 4 4 9-9" stroke="#333" strokeWidth="1.500" />
                  </svg>
                </span>
              </td>
              <td className={cell}>{file.created}</td>
              <td className={cell}>{file.author}</td>
              <td className={cell}>{file.ref}</td>
            </tr>
          ))}
        </tbody>
      </table>
      <div className="w-[22px] flex-1 bg-[#efefef]" />
    </div>
  );
}

function ContractPane() {
  return (
    <main className="mr-[15px] mb-4 flex flex-1 flex-col border border-[#d9d9d9] bg-white pt-[14px] pr-[15px] pb-4 pl-[14px]">
      <div className="flex flex-col gap-[11px]">
        <div className="flex justify-between">
          <Group title="Договор">
            <Field label="Серия" hideLabel className="w-[18px]" />
            <Field label="Номер договора" hideLabel value="Г0007" className="w-[56px]" />
            <PushButton icon={<PencilIcon />} title="Править" />
            <PushButton icon={<EditSearchIcon />} title="Просмотр" />
            <PushButton icon={<PrinterIcon />} title="Печать" />
            <PushButton icon={<SignatureIcon />} title="Подпись" className="w-[37px] shrink-0 border-[#1b4a74] bg-[#cce4f7]" />
          </Group>
          <Group title="Карта">
            <Field label="Временная:" className="w-[120px]" />
            <PushButton icon={<PencilIcon />} title="Править" />
            <Field label="Постоянная:" className="w-[126px]" />
            <PushButton icon={<PencilIcon />} title="Править" />
            <PushButton icon={<CardsIcon />} title="Карты" />
          </Group>
        </div>

        <div className="flex gap-[10px]">
          <Group title="Шаблон" className="flex-1">
            <p className="w-full pb-3 text-center text-[17px]">Гостевая (1 год)</p>
          </Group>
          <Group title="Срок действия">
            <Field label="с:" value="23.08.2016" className="w-[118px]" />
            <Field label="по:" value="22.08.2017" className="w-[130px]" />
            <PushButton icon={<PencilIcon />} title="Править" />
            <PushButton icon={<InfoIcon />} title="Информация" />
          </Group>
          <Group title="С заморозкой">
            <Field label="по:" value="22.08.2017" className="w-[128px]" />
          </Group>
        </div>

        <div className="flex gap-[10px]">
          <Group title="Состояние">
            <span className="flex items-center gap-2">
              <PlayIcon />
              Открыто
            </span>
            <PushButton icon={<PencilIcon />} title="Править" />
          </Group>
          <Group title="Менеджер" className="flex-1">
            <p className="flex-1 pb-3 text-center">admin</p>
            <PushButton icon={<PencilIcon />} title="Править" />
          </Group>
        </div>

        <Group title="Комментарий">
          <Field label="Комментарий" hideLabel className="flex-[63]" />
          <PushButton icon={<PencilIcon />} title="Править" className="flex-[100] border-[#adadad] bg-[#e1e1e1]" />
        </Group>
      </div>

      <TabStrip
        tabs={detailTabs}
        gap="gap-[7px]"
        className="mt-[10px] ml-[2px] h-8"
        itemClass="h-[30px] first:border-l"
        activeClass="h-8"
      />
      <section className="flex flex-1 flex-col gap-[10px] border border-[#d9d9d9] bg-white px-[14px] pt-[14px] pb-4">
        <FilesTable />
        <div className="flex gap-[10px]">
          {fileActions.map((action) => (
            <PushButton key={action.label} {...action} className={wideButton} />
          ))}
        </div>
      </section>

      <div className="mt-[11px] flex gap-[10px]">
        {contractActions.map((action) => (
          <PushButton key={action.label} {...action} className={wideButton} />
        ))}
      </div>
    </main>
  );
}

export default function App() {
  return (
    <div className="flex min-h-screen flex-col bg-[#efefef] font-['Noto_Sans',sans-serif] text-base leading-5 text-black">
      <IconDefs />
      <TitleBar />
      <Toolbar />
      <TabStrip tabs={mainTabs} className="h-8" itemClass="h-[30px]" activeClass="h-8" />

      <div className="mr-[2px] flex flex-1 flex-col border-t border-r border-b border-[#d9d9d9] bg-white pr-[3px] pb-[3px]">
        <div className="flex justify-between">
          <TabStrip tabs={docTabs} closable className="h-[33px] text-[17px]" itemClass="h-[30px]" activeClass="h-8" />
          <div className="-mr-[1px] flex items-center gap-[11px]">
            <button
              type="button"
              aria-label="Закрыть вкладку"
              className="flex h-[29px] w-9 items-center justify-center border border-[#adadad] bg-[#e1e1e1]"
            >
              <CloseRedIcon />
            </button>
            <button
              type="button"
              aria-label="Список вкладок"
              className="flex h-[29px] w-[29px] items-center justify-center border border-[#adadad] bg-[#e1e1e1]"
            >
              <CopiesIcon />
            </button>
          </div>
        </div>

        <div className="flex flex-1 flex-col border-t border-r border-b border-[#d9d9d9]">
          <ClientHeader />
          <div className="mt-[9px] flex flex-1">
            <SideTabs />
            <ContractPane />
          </div>
        </div>
      </div>

      <footer className="h-8 border-b border-black" />
    </div>
  );
}
